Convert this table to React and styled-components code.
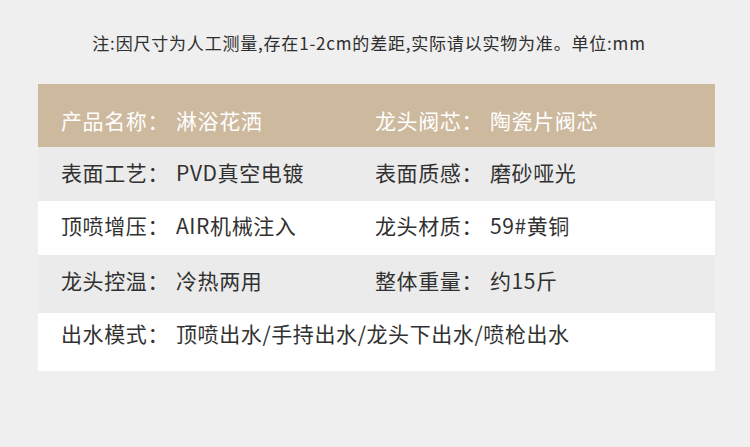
import React from 'react'
import styled, { createGlobalStyle } from 'styled-components'

const Global = createGlobalStyle`
  html, body {
    margin: 0;
    padding: 0;
    background: #efefef;
  }
  body {
    font-family: "Noto Sans CJK SC", "Noto Sans", sans-serif;
    color: #333;
  }
`

const Page = styled.div`
  width: 750px;
  height: 447px;
  background: #efefef;
  overflow: hidden;
`

const Note = styled.div`
  height: 84px;
  display: flex;
  align-items: center;
  justify-content: center;
  font-size: 17px;
  letter-spacing: 0.8px;
  color: #2e2e2e;
  padding-right: 12px;
  box-sizing: border-box;
`

const Table = styled.div`
  margin-left: 38px;
  width: 677px;
  display: flex;
  flex-direction: column;
`

const tones = {
  head: '#cdb99d',
  gray: '#ebebeb',
  white: '#ffffff',
}

const Row = styled.div`
  height: ${p => p.$h}px;
  padding-top: ${p => p.$pad}px;
  box-sizing: border-box;
  background: ${p => tones[p.$tone]};
  color: ${p => (p.$tone === 'head' ? '#ffffff' : '#313131')};
  display: grid;
  grid-template-columns: 314px 1fr;
  padding-left: 23px;
  font-size: 21px;
  line-height: 20px;
  letter-spacing: 0.6px;
`

const Cell = styled.div`
  display: flex;
  gap: 7px;
  white-space: nowrap;
`

const Label = styled.span``

const Value = styled.span``

const rows = [
  { tone: 'head', h: 63, pad: 26, cells: [['产品名称：', '淋浴花洒'], ['龙头阀芯：', '陶瓷片阀芯']] },
  { tone: 'gray', h: 54, pad: 15, cells: [['表面工艺：', 'PVD真空电镀'], ['表面质感：', '磨砂哑光']] },
  { tone: 'white', h: 54, pad: 14, cells: [['顶喷增压：', 'AIR机械注入'], ['龙头材质：', '59#黄铜']] },
  { tone: 'gray', h: 58, pad: 15, cells: [['龙头控温：', '冷热两用'], ['整体重量：', '约15斤']] },
  { tone: 'white', h: 58, pad: 10, cells: [['出水模式：', '顶喷出水/手持出水/龙头下出水/喷枪出水']] },
]

export default function App() {
  return (
    <Page>
      <Global />
      <Note>注:因尺寸为人工测量,存在1-2cm的差距,实际请以实物为准。单位:mm</Note>
      <Table>
        {rows.map((r, i) => (
          <Row key={i} $tone={r.tone} $h={r.h} $pad={r.pad}>
            {r.cells.map(([k, v]) => (
              <Cell key={k}>
                <Label>{k}</Label>
                <Value>{v}</Value>
              </Cell>
            ))}
          </Row>
        ))}
      </Table>
    </Page>
  )
}
